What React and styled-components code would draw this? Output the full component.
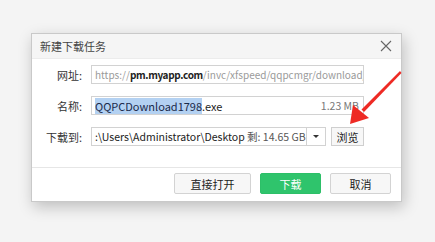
import React from 'react';
import styled, { createGlobalStyle } from 'styled-components';

const GlobalStyle = createGlobalStyle`
  html, body {
    margin: 0;
    padding: 0;
    background: #f4f4f4;
    font-family: "Noto Sans CJK SC", "Noto Sans", sans-serif;
  }
`;

const Page = styled.div`
  position: relative;
  width: 435px;
  height: 242px;
  overflow: hidden;
  padding: 33px 0 0 31px;
  box-sizing: border-box;
`;

const Dialog = styled.div`
  width: 371px;
  height: 169px;
  box-sizing: border-box;
  background: #fff;
  border: 1px solid #c9c9c9;
  box-shadow: 2px 5px 14px rgba(0, 0, 0, 0.22);
  display: flex;
  flex-direction: column;
`;

const TitleBar = styled.div`
  height: 24px;
  flex: none;
  display: flex;
  align-items: center;
  justify-content: space-between;
  padding: 0 8px 0 8px;
  background: #f5f5f5;
  border-bottom: 1px solid #ececec;
`;

const Title = styled.span`
  font-size: 11px;
  color: #444;
`;

const Close = styled.svg`
  width: 12px;
  height: 12px;
  margin-right: 1px;
`;

const Body = styled.div`
  flex: 1;
  display: flex;
  flex-direction: column;
  gap: 12px;
  padding-top: 6px;
`;

const Row = styled.div`
  display: flex;
  align-items: center;
  height: 19px;
`;

const Label = styled.span`
  width: 50px;
  text-align: right;
  font-size: 11px;
  color: #333;
  margin-right: 9px;
  flex: none;
`;

const Field = styled.div`
  width: ${p => p.$w}px;
  height: 19px;
  box-sizing: border-box;
  border: 1px solid #d2d2d2;
  display: flex;
  align-items: center;
  padding: 0 4px 0 3px;
  font-size: ${p => p.$fs || 10.8}px;
  color: #222;
  white-space: nowrap;
  overflow: hidden;
  flex: none;
`;

const Grey = styled.span`
  color: ${p => p.$c || '#9a9a9a'};
`;

const Strong = styled.span`
  color: #222;
  font-weight: 700;
  letter-spacing: -0.35px;
`;

const Selected = styled.span`
  background: #b3d1f2;
  color: #1a2a4a;
`;

const Size = styled.span`
  margin-left: auto;
  color: #777;
  font-size: 10.5px;
`;

const Drop = styled.div`
  width: 19px;
  height: 19px;
  box-sizing: border-box;
  border: 1px solid #d2d2d2;
  border-left: none;
  display: flex;
  align-items: center;
  justify-content: center;
  flex: none;
`;

const Caret = styled.div`
  width: 0;
  height: 0;
  border-left: 3px solid transparent;
  border-right: 3px solid transparent;
  border-top: 3px solid #333;
`;

const SmallButton = styled.div`
  margin-left: 5px;
  width: 33px;
  height: 19px;
  box-sizing: border-box;
  border: 1px solid #cfcfcf;
  background: #f7f7f7;
  display: flex;
  align-items: center;
  justify-content: center;
  font-size: 11px;
  color: #222;
`;

const Footer = styled.div`
  height: 34px;
  flex: none;
  border-top: 1px solid #e6e6e6;
  display: flex;
  justify-content: flex-end;
  align-items: flex-start;
  gap: 9px;
  padding: 5px 10px 0 0;
  box-sizing: border-box;
`;

const Button = styled.div`
  width: ${p => p.$w}px;
  height: 21px;
  box-sizing: border-box;
  border: 1px solid ${p => (p.$primary ? '#2dbf68' : '#d3d3d3')};
  background: ${p => (p.$primary ? '#2fc46c' : '#f7f7f7')};
  color: ${p => (p.$primary ? '#fff' : '#222')};
  border-radius: 2px;
  display: flex;
  align-items: center;
  justify-content: center;
  font-size: 11px;
`;

const Arrow = styled.svg`
  position: absolute;
  left: 340px;
  top: 65px;
  width: 70px;
  height: 65px;
`;

export default function App() {
  return (
    <Page>
      <GlobalStyle />
      <Dialog>
        <TitleBar>
          <Title>新建下载任务</Title>
          <Close viewBox="0 0 12 12">
            <path d="M1 1 L11 11 M11 1 L1 11" stroke="#666" strokeWidth="1.1" fill="none" />
          </Close>
        </TitleBar>
        <Body>
          <Row>
            <Label>网址:</Label>
            <Field $w={273} $fs={10}>
              <Grey>https://</Grey>
              <Strong>pm.myapp.com</Strong>
              <Grey>/invc/xfspeed/qqpcmgr/download/QQPCDownload1798.exe</Grey>
            </Field>
          </Row>
          <Row>
            <Label>名称:</Label>
            <Field $w={273} $fs={11}>
              <Selected>QQPCDownload1798</Selected>
              <span>.exe</span>
              <Size>1.23 MB</Size>
            </Field>
          </Row>
          <Row>
            <Label>下载到:</Label>
            <Field $w={216} $fs={10.5}>
              <span>:\Users\Administrator\Desktop</span>
              <Grey $c="#555">&nbsp;剩: 14.65 GB</Grey>
            </Field>
            <Drop>
              <Caret />
            </Drop>
            <SmallButton>浏览</SmallButton>
          </Row>
        </Body>
        <Footer>
          <Button $w={77}>直接打开</Button>
          <Button $w={61} $primary>下载</Button>
          <Button $w={61}>取消</Button>
        </Footer>
      </Dialog>
      <Arrow viewBox="0 0 70 65">
        <path d="M60 6 L61.5 8 L24 47 L21.5 44.5 Z" fill="#ee2a24" />
        <path d="M10 59 L13 40 L29 53 Z" fill="#ee2a24" />
      </Arrow>
    </Page>
  );
}
